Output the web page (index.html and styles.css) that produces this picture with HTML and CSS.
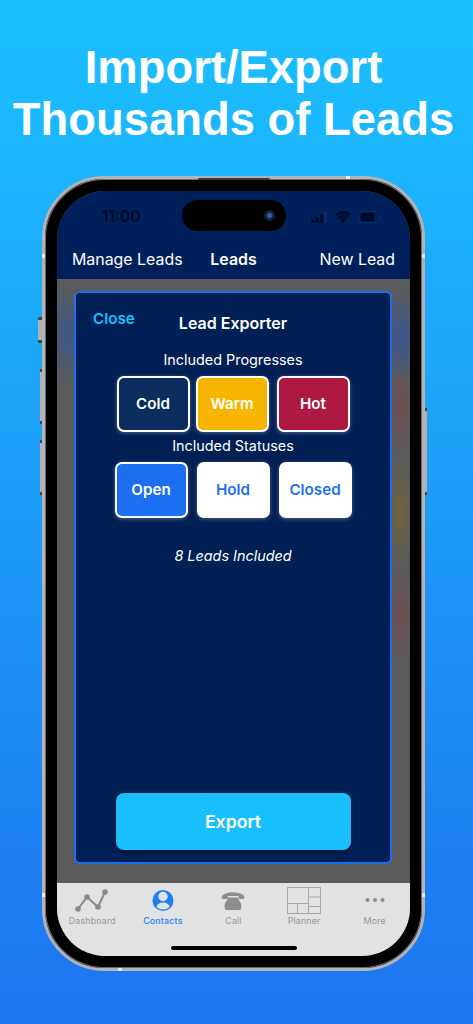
FILE: index.html
```html
<!DOCTYPE html>
<html lang="en">
<head>
<meta charset="utf-8">
<title>Import/Export Thousands of Leads</title>
<link rel="stylesheet" href="styles.css">
</head>
<body>
<main class="page">
  <h1 class="headline">Import/Export<br>Thousands of Leads</h1>
  <div class="phone">
    <span class="hw hw-mute"></span>
    <span class="hw hw-up"></span>
    <span class="hw hw-down"></span>
    <span class="hw hw-power"></span>
    <span class="speaker"></span>
    <span class="band band-l1"></span>
    <span class="band band-r1"></span>
    <span class="band band-l2"></span>
    <span class="band band-r2"></span>
    <span class="band-h band-t"></span>
    <span class="band-h band-b"></span>
    <div class="screen">
      <header class="topbar">
        <div class="status">
          <span class="time">11:00</span>
          <div class="island"><span class="camera"></span></div>
          <div class="status-icons">
            <svg width="16" height="11" viewBox="0 0 16 11"><rect x="0" y="7.500" width="3" height="3.500" rx=".7" fill="#000a2b"/><rect x="4.500" y="5" width="3" height="6" rx=".7" fill="#000a2b"/><rect x="9" y="2.500" width="3" height="8.500" rx=".7" fill="#000a2b"/><rect x="13.500" y="0" width="2.500" height="11" rx=".7" fill="#0a2a68"/></svg>
            <svg width="16" height="12" viewBox="0 0 16 12"><path d="M1 4.200a10 10 0 0 1 14 0M3.400 6.700a6.600 6.600 0 0 1 9.200 0" fill="none" stroke="#000a2b" stroke-width="2.100"/><path d="M8 12L4.800 8.500a4.600 4.600 0 0 1 6.400 0z" fill="#000a2b"/></svg>
            <svg width="24" height="12" viewBox="0 0 24 12"><rect x=".5" y=".5" width="20" height="11" rx="3.200" fill="none" stroke="#0a2a68"/><rect x="1.500" y="1.500" width="14" height="9" rx="2.400" fill="#000a2b"/><path d="M21.800 4.200c.8.3 1.200 1 1.200 1.800s-.4 1.500-1.200 1.800z" fill="#0a2a68"/></svg>
          </div>
        </div>
        <nav class="navrow">
          <span class="nav-link">Manage Leads</span>
          <span class="nav-title">Leads</span>
          <span class="nav-link nav-end">New Lead</span>
        </nav>
      </header>
      <section class="overlay">
        <div class="modal">
          <div class="modal-head">
            <span class="close">Close</span>
            <h2 class="modal-title">Lead Exporter</h2>
          </div>
          <p class="group-label label-progress">Included Progresses</p>
          <div class="chip-row row-progress">
            <button class="chip chip-cold">Cold</button>
            <button class="chip chip-warm">Warm</button>
            <button class="chip chip-hot">Hot</button>
          </div>
          <p class="group-label label-status">Included Statuses</p>
          <div class="chip-row row-status">
            <button class="chip chip-open">Open</button>
            <button class="chip chip-off">Hold</button>
            <button class="chip chip-off">Closed</button>
          </div>
          <p class="count">8 Leads Included</p>
          <button class="export">Export</button>
        </div>
      </section>
      <footer class="tabbar">
        <div class="tab">
          <svg class="tab-icon" width="36" height="28" viewBox="0 0 36 28"><path d="M4 22L13 10l11 10L31 5" fill="none" stroke="#8a8a8a" stroke-width="2"/><circle cx="4" cy="22" r="2.800" fill="#8a8a8a"/><circle cx="13" cy="10" r="2.800" fill="#8a8a8a"/><circle cx="24" cy="20" r="2.800" fill="#8a8a8a"/><circle cx="31" cy="5" r="2.800" fill="#8a8a8a"/></svg>
          <span class="tab-label">Dashboard</span>
        </div>
        <div class="tab tab-active">
          <svg class="tab-icon" width="36" height="28" viewBox="0 0 36 28"><circle cx="18" cy="13.500" r="10.500" fill="#1c80f5"/><circle cx="18" cy="9.500" r="4.700" fill="#e2e2e2"/><path d="M11.500 20c.4-3 3-4.500 6.500-4.500s6.100 1.500 6.500 4.500a9.500 9.500 0 0 1-13 0z" fill="#e2e2e2"/></svg>
          <span class="tab-label">Contacts</span>
        </div>
        <div class="tab">
          <svg class="tab-icon" width="36" height="28" viewBox="0 0 36 28"><path d="M7 12c-.6-1.400-.4-3 .8-3.900C10.500 6 14 5.200 18 5.200s7.500.8 10.200 2.900c1.200.9 1.400 2.500.8 3.900h-5.200l-.6-3h-10l-.6 3z" fill="#8e8e8e"/><path d="M13.500 10.500h9c.8 2.500 4 5 4 8.500 0 3-1 4-2 4h-13c-1 0-2-1-2-4 0-3.500 3.200-6 4-8.500z" fill="#8e8e8e"/></svg>
          <span class="tab-label">Call</span>
        </div>
        <div class="tab">
          <svg class="tab-icon" width="36" height="28" viewBox="0 0 36 28"><g fill="none" stroke="#a6a6a6"><rect x="1.500" y=".5" width="33" height="26"/><path d="M22.500.5v26M1.500 16.500h21M11.500 16.500v10M22.500 10h12M22.500 19.500h12"/></g></svg>
          <span class="tab-label">Planner</span>
        </div>
        <div class="tab">
          <svg class="tab-icon" width="36" height="28" viewBox="0 0 36 28"><circle cx="10.500" cy="13" r="2" fill="#8a8a8a"/><circle cx="18" cy="13" r="2" fill="#8a8a8a"/><circle cx="25.500" cy="13" r="2" fill="#8a8a8a"/></svg>
          <span class="tab-label">More</span>
        </div>
        <span class="home-bar"></span>
      </footer>
    </div>
  </div>
</main>
</body>
</html>
```
FILE: styles.css
```css
* { box-sizing: border-box; }
html, body { margin: 0; padding: 0; }
body {
  width: 473px;
  height: 1024px;
  overflow: hidden;
  font-family: Inter, "Liberation Sans", sans-serif;
  background: linear-gradient(180deg, #1bc1ff 0%, #1e74ef 100%);
}
.page { display: flex; flex-direction: column; align-items: center; padding-right: 6px; }
.headline {
  margin: 42px 0 0;
  color: #fff;
  font: 700 45.400px/52px "Liberation Sans", sans-serif;
  text-align: center;
  white-space: nowrap;
}
.phone {
  position: relative;
  width: 383px;
  height: 795px;
  margin-top: 30px;
  padding: 12px;
  border: 3px solid #b4b4b8;
  border-radius: 62px;
  background: #000;
  box-shadow: inset 0 0 0 1px #6c6c70;
}
.hw { position: absolute; background: #b0b0b2; }
.hw-mute { left: -7px; top: 138px; width: 4px; height: 26px; border-radius: 1px 0 0 1px; border-top: 3px solid #444; border-bottom: 3px solid #444; }
.hw-up { left: -5px; top: 190px; width: 2px; height: 55px; border-top: 3px solid #444; border-bottom: 3px solid #444; }
.hw-down { left: -5px; top: 261px; width: 2px; height: 55px; border-top: 3px solid #444; border-bottom: 3px solid #444; }
.hw-power { right: -5px; top: 229px; width: 2px; height: 87px; border-top: 3px solid #444; border-bottom: 3px solid #444; }
.speaker { position: absolute; top: -1px; left: 153px; width: 72px; height: 2px; background: #3a3a3c; border-radius: 0 0 2px 2px; }
.band { position: absolute; width: 3px; height: 4px; background: #e8e8ea; }
.band-l1 { left: -3px; top: 75px; }
.band-r1 { right: -3px; top: 75px; }
.band-l2 { left: -3px; bottom: 71px; }
.band-r2 { right: -3px; bottom: 71px; }
.band-h { position: absolute; width: 4px; height: 3px; background: #e8e8ea; }
.band-t { top: -3px; right: 72px; }
.band-b { bottom: -3px; left: 73px; }

.screen {
  display: flex;
  flex-direction: column;
  position: relative;
  width: 353px;
  height: 765px;
  overflow: hidden;
  border-radius: 48px;
  background: #5b5b5b;
}
.topbar { flex: none; height: 88px; background: #00205b; }
.status { position: relative; display: flex; height: 53px; }
.time { position: absolute; left: 45px; top: 15px; font-size: 15.500px; line-height: 22px; font-weight: 600; color: #000a2b; }
.island { position: absolute; left: 125px; top: 9px; width: 104px; height: 31px; border-radius: 16px; background: #000; }
.camera { position: absolute; left: 82px; top: 10px; width: 11px; height: 11px; border-radius: 50%; background: radial-gradient(circle, #3b5a9c 0 25%, #101c3e 45% 100%); }
.status-icons { position: absolute; left: 254px; top: 20px; display: flex; gap: 8px; align-items: center; }
.navrow { display: grid; grid-template-columns: 1fr auto 1fr; align-items: center; height: 28px; padding: 4px 15px 0; color: #fff; }
.nav-link { font-size: 15.900px; line-height: 20px; white-space: nowrap; }
.nav-end { text-align: right; }
.nav-title { font-size: 15.900px; line-height: 20px; font-weight: 600; }

.overlay {
  flex: 1;
  padding: 12px 18px 19px 17px;
  background:
    radial-gradient(ellipse 24px 48px at 346px 58px, rgba(40,85,165,.7), transparent),
    radial-gradient(ellipse 24px 48px at 8px 56px, rgba(40,85,165,.6), transparent),
    radial-gradient(ellipse 14px 50px at 343px 128px, rgba(140,55,65,.4), transparent),
    radial-gradient(ellipse 14px 50px at 343px 234px, rgba(135,105,25,.5), transparent),
    radial-gradient(ellipse 14px 50px at 343px 334px, rgba(140,55,65,.4), transparent),
    #5b5b5b;
}
.modal {
  display: flex;
  flex-direction: column;
  height: 573px;
  padding: 17px 0 12px;
  border: 2px solid #1c6eef;
  border-radius: 6px;
  background: #001f54;
  color: #fff;
}
.modal-head { position: relative; height: 32px; text-align: center; }
.close { position: absolute; left: 17px; top: 0; font-size: 15.200px; font-weight: 600; line-height: 18px; color: #1ac0ff; }
.modal-title { margin: 0; padding-top: 3px; font-size: 16px; line-height: 20px; font-weight: 600; }
.group-label { margin: 0; font-size: 14.400px; line-height: 18px; text-align: center; }
.label-progress { margin-top: 9px; }
.label-status { margin-top: 5px; }
.chip-row { display: flex; justify-content: center; }
.row-progress { gap: 6px; margin-top: 7px; }
.row-status { gap: 9px; margin-top: 7px; }
.chip {
  width: 73px;
  height: 56px;
  padding: 0;
  border: 2px solid #fff;
  border-radius: 7px;
  font: 600 15.200px/1 Inter, "Liberation Sans", sans-serif;
  color: #fff;
  box-shadow: 0 1px 4px rgba(255,255,255,.3);
}
.chip-hot { margin-left: 2px; }
.chip-cold { background: #0c2e5e; }
.chip-warm { background: #f7b500; }
.chip-hot { background: #ad1942; }
.chip-open { background: #1c6ff0; }
.chip-off { border-color: #fff; background: #fff; color: #1c6ff0; }
.count { margin: 28px 0 0; font-size: 14.400px; line-height: 20px; font-style: italic; text-align: center; }
.export {
  align-self: center;
  width: 235px;
  height: 57px;
  margin-top: auto;
  border: 0;
  border-radius: 8px;
  background: #1ac0fd;
  color: #fff;
  font: 600 17.700px/1 Inter, "Liberation Sans", sans-serif;
  box-shadow: 0 2px 3px rgba(0,0,0,.45);
}
.tabbar {
  flex: none;
  position: relative;
  display: grid;
  grid-template-columns: repeat(5, 1fr);
  height: 74px;
  background: #e2e2e2;
}
.tab { display: flex; flex-direction: column; align-items: center; padding-top: 4px; }
.tab-icon { display: block; }
.tab-label { margin-top: 0; font-size: 8.800px; line-height: 12px; letter-spacing: .2px; color: #969696; white-space: nowrap; }
.tab-active .tab-label { color: #1c80f5; font-weight: 500; }
.home-bar { position: absolute; left: 114px; bottom: 7px; width: 126px; height: 4px; border-radius: 2px; background: #000; }
```
